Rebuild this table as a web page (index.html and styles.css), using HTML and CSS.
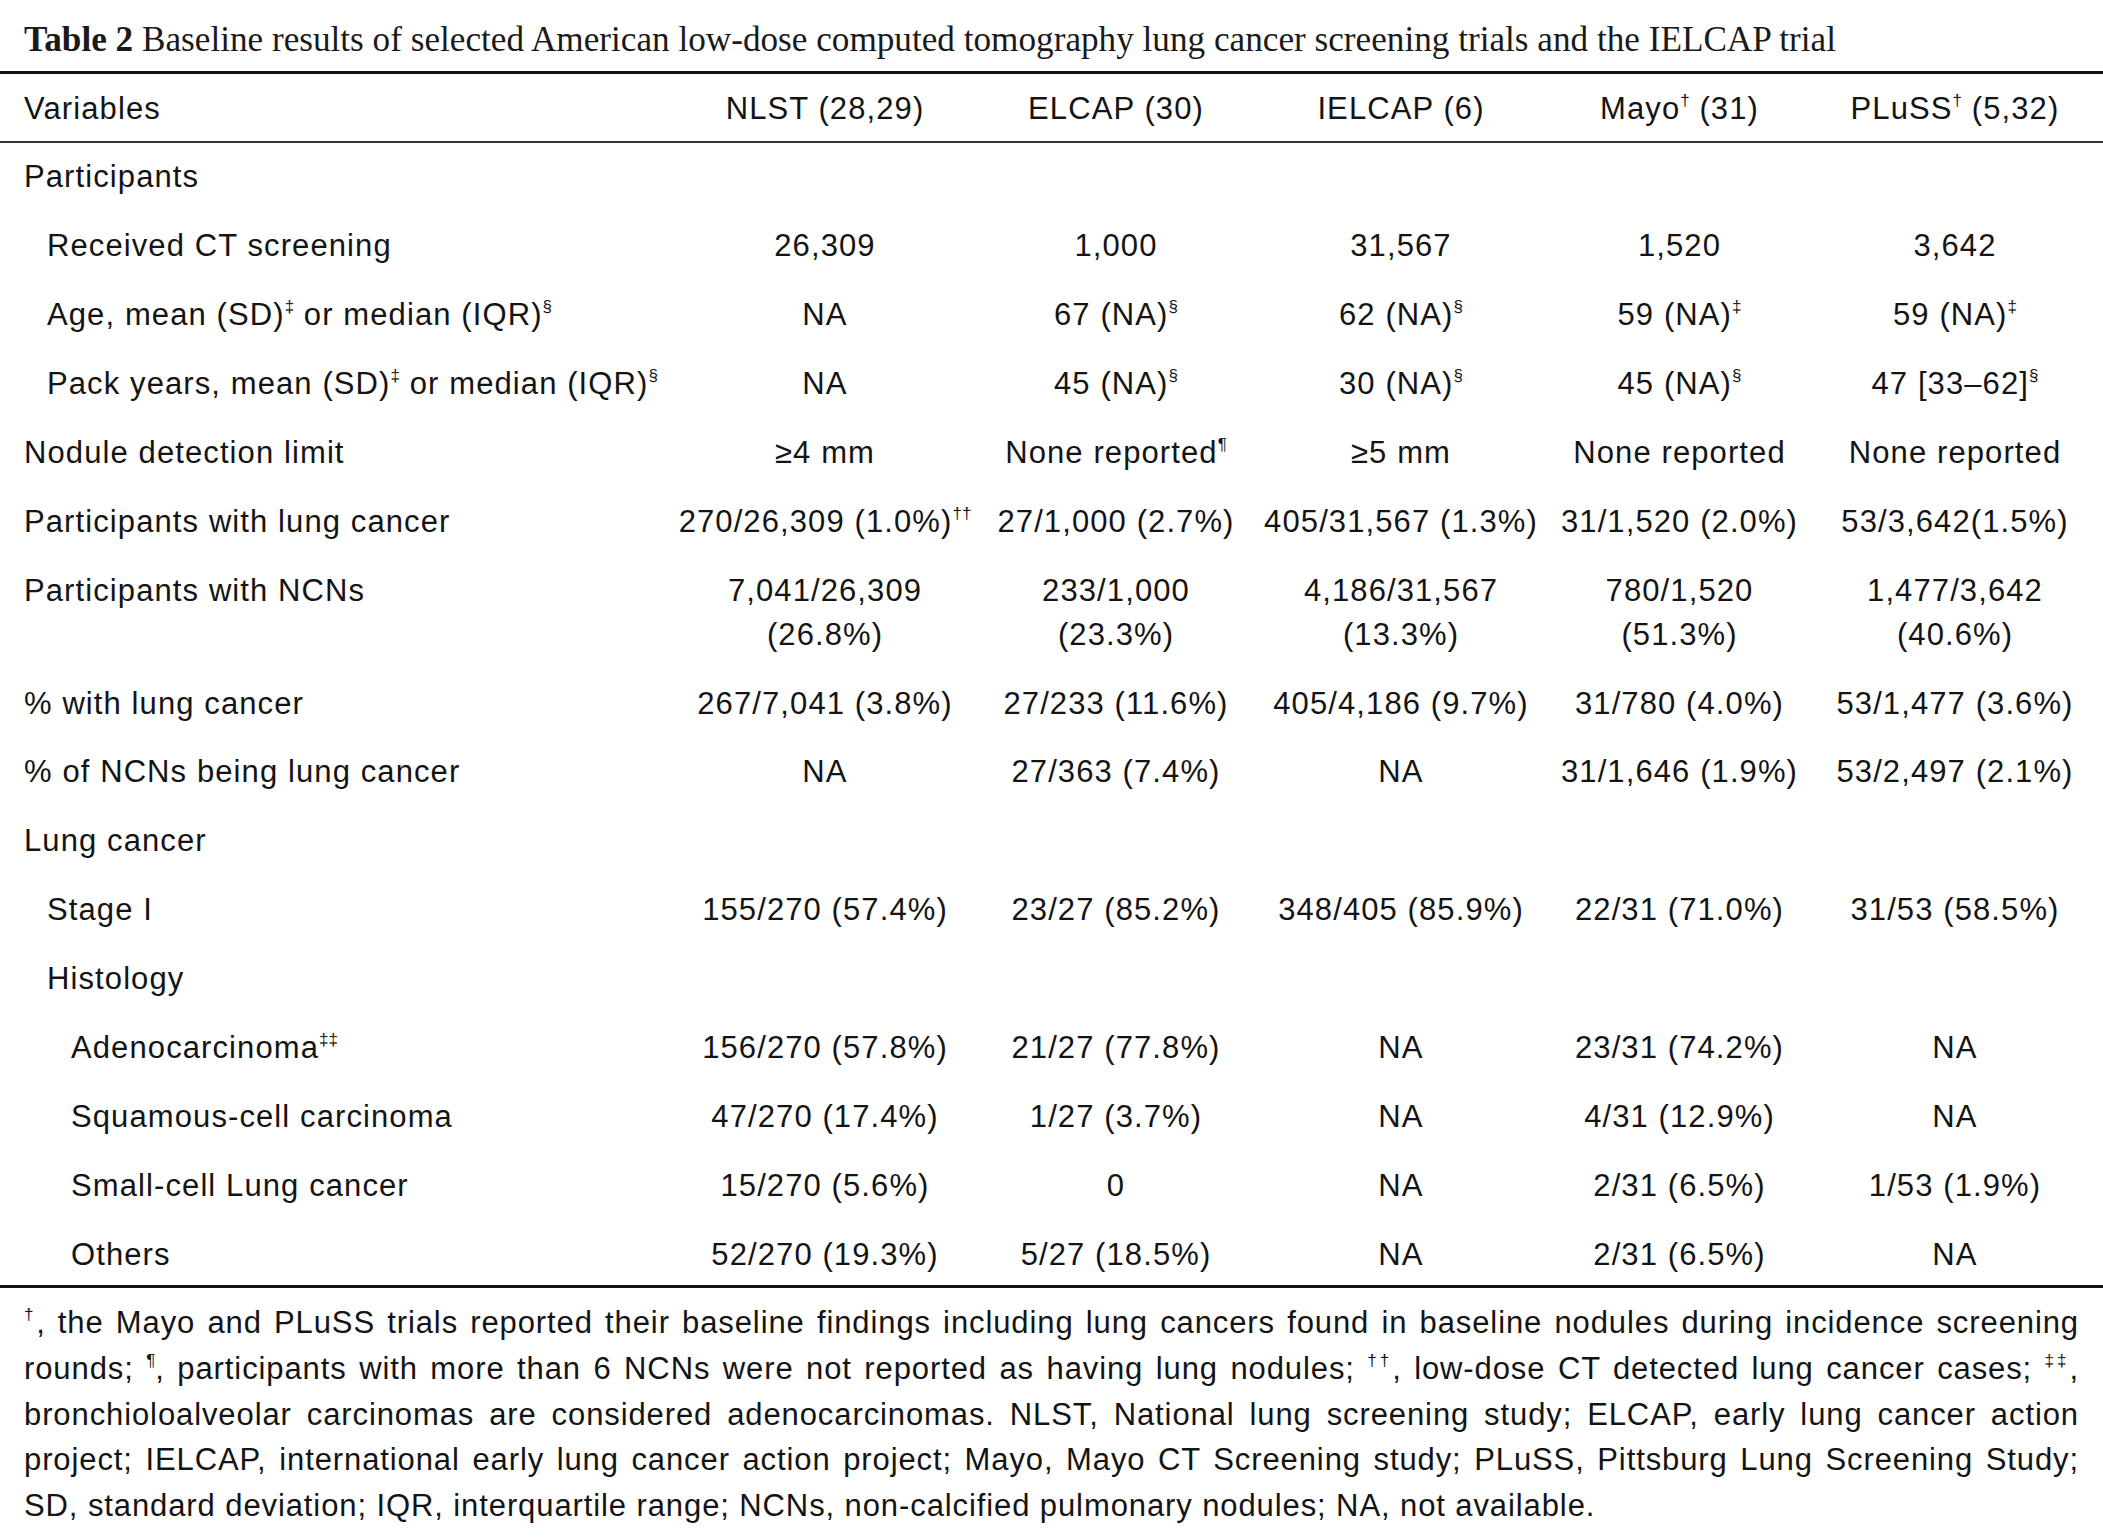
FILE: index.html
```html
<!DOCTYPE html>
<html>
<head>
<meta charset="utf-8">
<link rel="stylesheet" href="styles.css">
</head>
<body>
<div class="page">
  <p class="caption"><b>Table 2</b> Baseline results of selected American low-dose computed tomography lung cancer screening trials and the IELCAP trial</p>
  <table class="data">
    <colgroup>
      <col class="c-var"><col class="c-nlst"><col class="c-elcap"><col class="c-ielcap"><col class="c-mayo"><col class="c-pluss">
    </colgroup>
    <thead>
      <tr><th>Variables</th><th>NLST (28,29)</th><th>ELCAP (30)</th><th>IELCAP (6)</th><th>Mayo<sup>†</sup> (31)</th><th>PLuSS<sup>†</sup> (5,32)</th></tr>
    </thead>
    <tbody>
      <tr><td>Participants</td><td></td><td></td><td></td><td></td><td></td></tr>
      <tr><td class="l1">Received CT screening</td><td>26,309</td><td>1,000</td><td>31,567</td><td>1,520</td><td>3,642</td></tr>
      <tr><td class="l1">Age, mean (SD)<sup>‡</sup> or median (IQR)<sup>§</sup></td><td>NA</td><td>67 (NA)<sup>§</sup></td><td>62 (NA)<sup>§</sup></td><td>59 (NA)<sup>‡</sup></td><td>59 (NA)<sup>‡</sup></td></tr>
      <tr><td class="l1">Pack years, mean (SD)<sup>‡</sup> or median (IQR)<sup>§</sup></td><td>NA</td><td>45 (NA)<sup>§</sup></td><td>30 (NA)<sup>§</sup></td><td>45 (NA)<sup>§</sup></td><td>47 [33–62]<sup>§</sup></td></tr>
      <tr><td>Nodule detection limit</td><td>≥4 mm</td><td>None reported<sup>¶</sup></td><td>≥5 mm</td><td>None reported</td><td>None reported</td></tr>
      <tr><td>Participants with lung cancer</td><td>270/26,309 (1.0%)<sup>††</sup></td><td>27/1,000 (2.7%)</td><td>405/31,567 (1.3%)</td><td>31/1,520 (2.0%)</td><td>53/3,642(1.5%)</td></tr>
      <tr><td>Participants with NCNs</td><td>7,041/26,309<br>(26.8%)</td><td>233/1,000<br>(23.3%)</td><td>4,186/31,567<br>(13.3%)</td><td>780/1,520<br>(51.3%)</td><td>1,477/3,642<br>(40.6%)</td></tr>
      <tr><td>% with lung cancer</td><td>267/7,041 (3.8%)</td><td>27/233 (11.6%)</td><td>405/4,186 (9.7%)</td><td>31/780 (4.0%)</td><td>53/1,477 (3.6%)</td></tr>
      <tr><td>% of NCNs being lung cancer</td><td>NA</td><td>27/363 (7.4%)</td><td>NA</td><td>31/1,646 (1.9%)</td><td>53/2,497 (2.1%)</td></tr>
      <tr><td>Lung cancer</td><td></td><td></td><td></td><td></td><td></td></tr>
      <tr><td class="l1">Stage I</td><td>155/270 (57.4%)</td><td>23/27 (85.2%)</td><td>348/405 (85.9%)</td><td>22/31 (71.0%)</td><td>31/53 (58.5%)</td></tr>
      <tr><td class="l1">Histology</td><td></td><td></td><td></td><td></td><td></td></tr>
      <tr><td class="l2">Adenocarcinoma<sup>‡‡</sup></td><td>156/270 (57.8%)</td><td>21/27 (77.8%)</td><td>NA</td><td>23/31 (74.2%)</td><td>NA</td></tr>
      <tr><td class="l2">Squamous-cell carcinoma</td><td>47/270 (17.4%)</td><td>1/27 (3.7%)</td><td>NA</td><td>4/31 (12.9%)</td><td>NA</td></tr>
      <tr><td class="l2">Small-cell Lung cancer</td><td>15/270 (5.6%)</td><td>0</td><td>NA</td><td>2/31 (6.5%)</td><td>1/53 (1.9%)</td></tr>
      <tr class="last"><td class="l2">Others</td><td>52/270 (19.3%)</td><td>5/27 (18.5%)</td><td>NA</td><td>2/31 (6.5%)</td><td>NA</td></tr>
    </tbody>
  </table>
  <div class="notes">
    <span class="nl"><sup>†</sup>, the Mayo and PLuSS trials reported their baseline findings including lung cancers found in baseline nodules during incidence screening</span>
    <span class="nl">rounds; <sup>¶</sup>, participants with more than 6 NCNs were not reported as having lung nodules; <sup>††</sup>, low-dose CT detected lung cancer cases; <sup>‡‡</sup>,</span>
    <span class="nl">bronchioloalveolar carcinomas are considered adenocarcinomas. NLST, National lung screening study; ELCAP, early lung cancer action</span>
    <span class="nl">project; IELCAP, international early lung cancer action project; Mayo, Mayo CT Screening study; PLuSS, Pittsburg Lung Screening Study;</span>
    <span class="nl end">SD, standard deviation; IQR, interquartile range; NCNs, non-calcified pulmonary nodules; NA, not available.</span>
  </div>
</div>
</body>
</html>
```
FILE: styles.css
```css
html, body {
  margin: 0;
  padding: 0;
  background: #ffffff;
}

.page {
  width: 2103px;
  color: #141414;
  font-family: "Liberation Sans", Arial, sans-serif;
}

.caption {
  margin: 0 0 9px;
  padding: 18px 24px 0;
  font-family: "Liberation Serif", "Times New Roman", serif;
  font-size: 35.2px;
  line-height: 44px;
  white-space: nowrap;
  color: #1a1a1a;
}

.caption b {
  font-weight: bold;
}

.data {
  width: 2103px;
  border-collapse: separate;
  border-spacing: 0;
  table-layout: fixed;
  font-size: 31px;
  letter-spacing: 1.1px;
  line-height: 44px;
}

.c-var { width: 668px; }
.c-nlst { width: 314px; }
.c-elcap { width: 268px; }
.c-ielcap { width: 302px; }
.c-mayo { width: 255px; }
.c-pluss { width: 296px; }

.data th,
.data td {
  padding: 12.45px 0;
  text-align: center;
  font-weight: normal;
  white-space: nowrap;
  vertical-align: top;
}

.data th {
  border-top: 3px solid #111;
  border-bottom: 2px solid #333;
  padding-top: 12.6px;
  padding-bottom: 10.4px;
}

.data th:first-child,
.data td:first-child {
  text-align: left;
  padding-left: 24px;
}

.data td.l1 { padding-left: 47px; }
.data td.l2 { padding-left: 71px; }

.data tbody tr:first-child td {
  padding-top: 12.5px;
}

.data tr.last td {
  border-bottom: 3px solid #111;
  padding-bottom: 8.5px;
}

sup {
  font-size: 0.55em;
  letter-spacing: 0;
  line-height: 0;
  vertical-align: 0.75em;
}

.notes {
  padding: 12px 24px 0 24px;
  font-size: 31px;
  letter-spacing: 0.9px;
  line-height: 45.7px;
}

.nl {
  display: block;
  text-align: justify;
  text-align-last: justify;
  white-space: nowrap;
}

.nl.end {
  text-align-last: left;
}
```
